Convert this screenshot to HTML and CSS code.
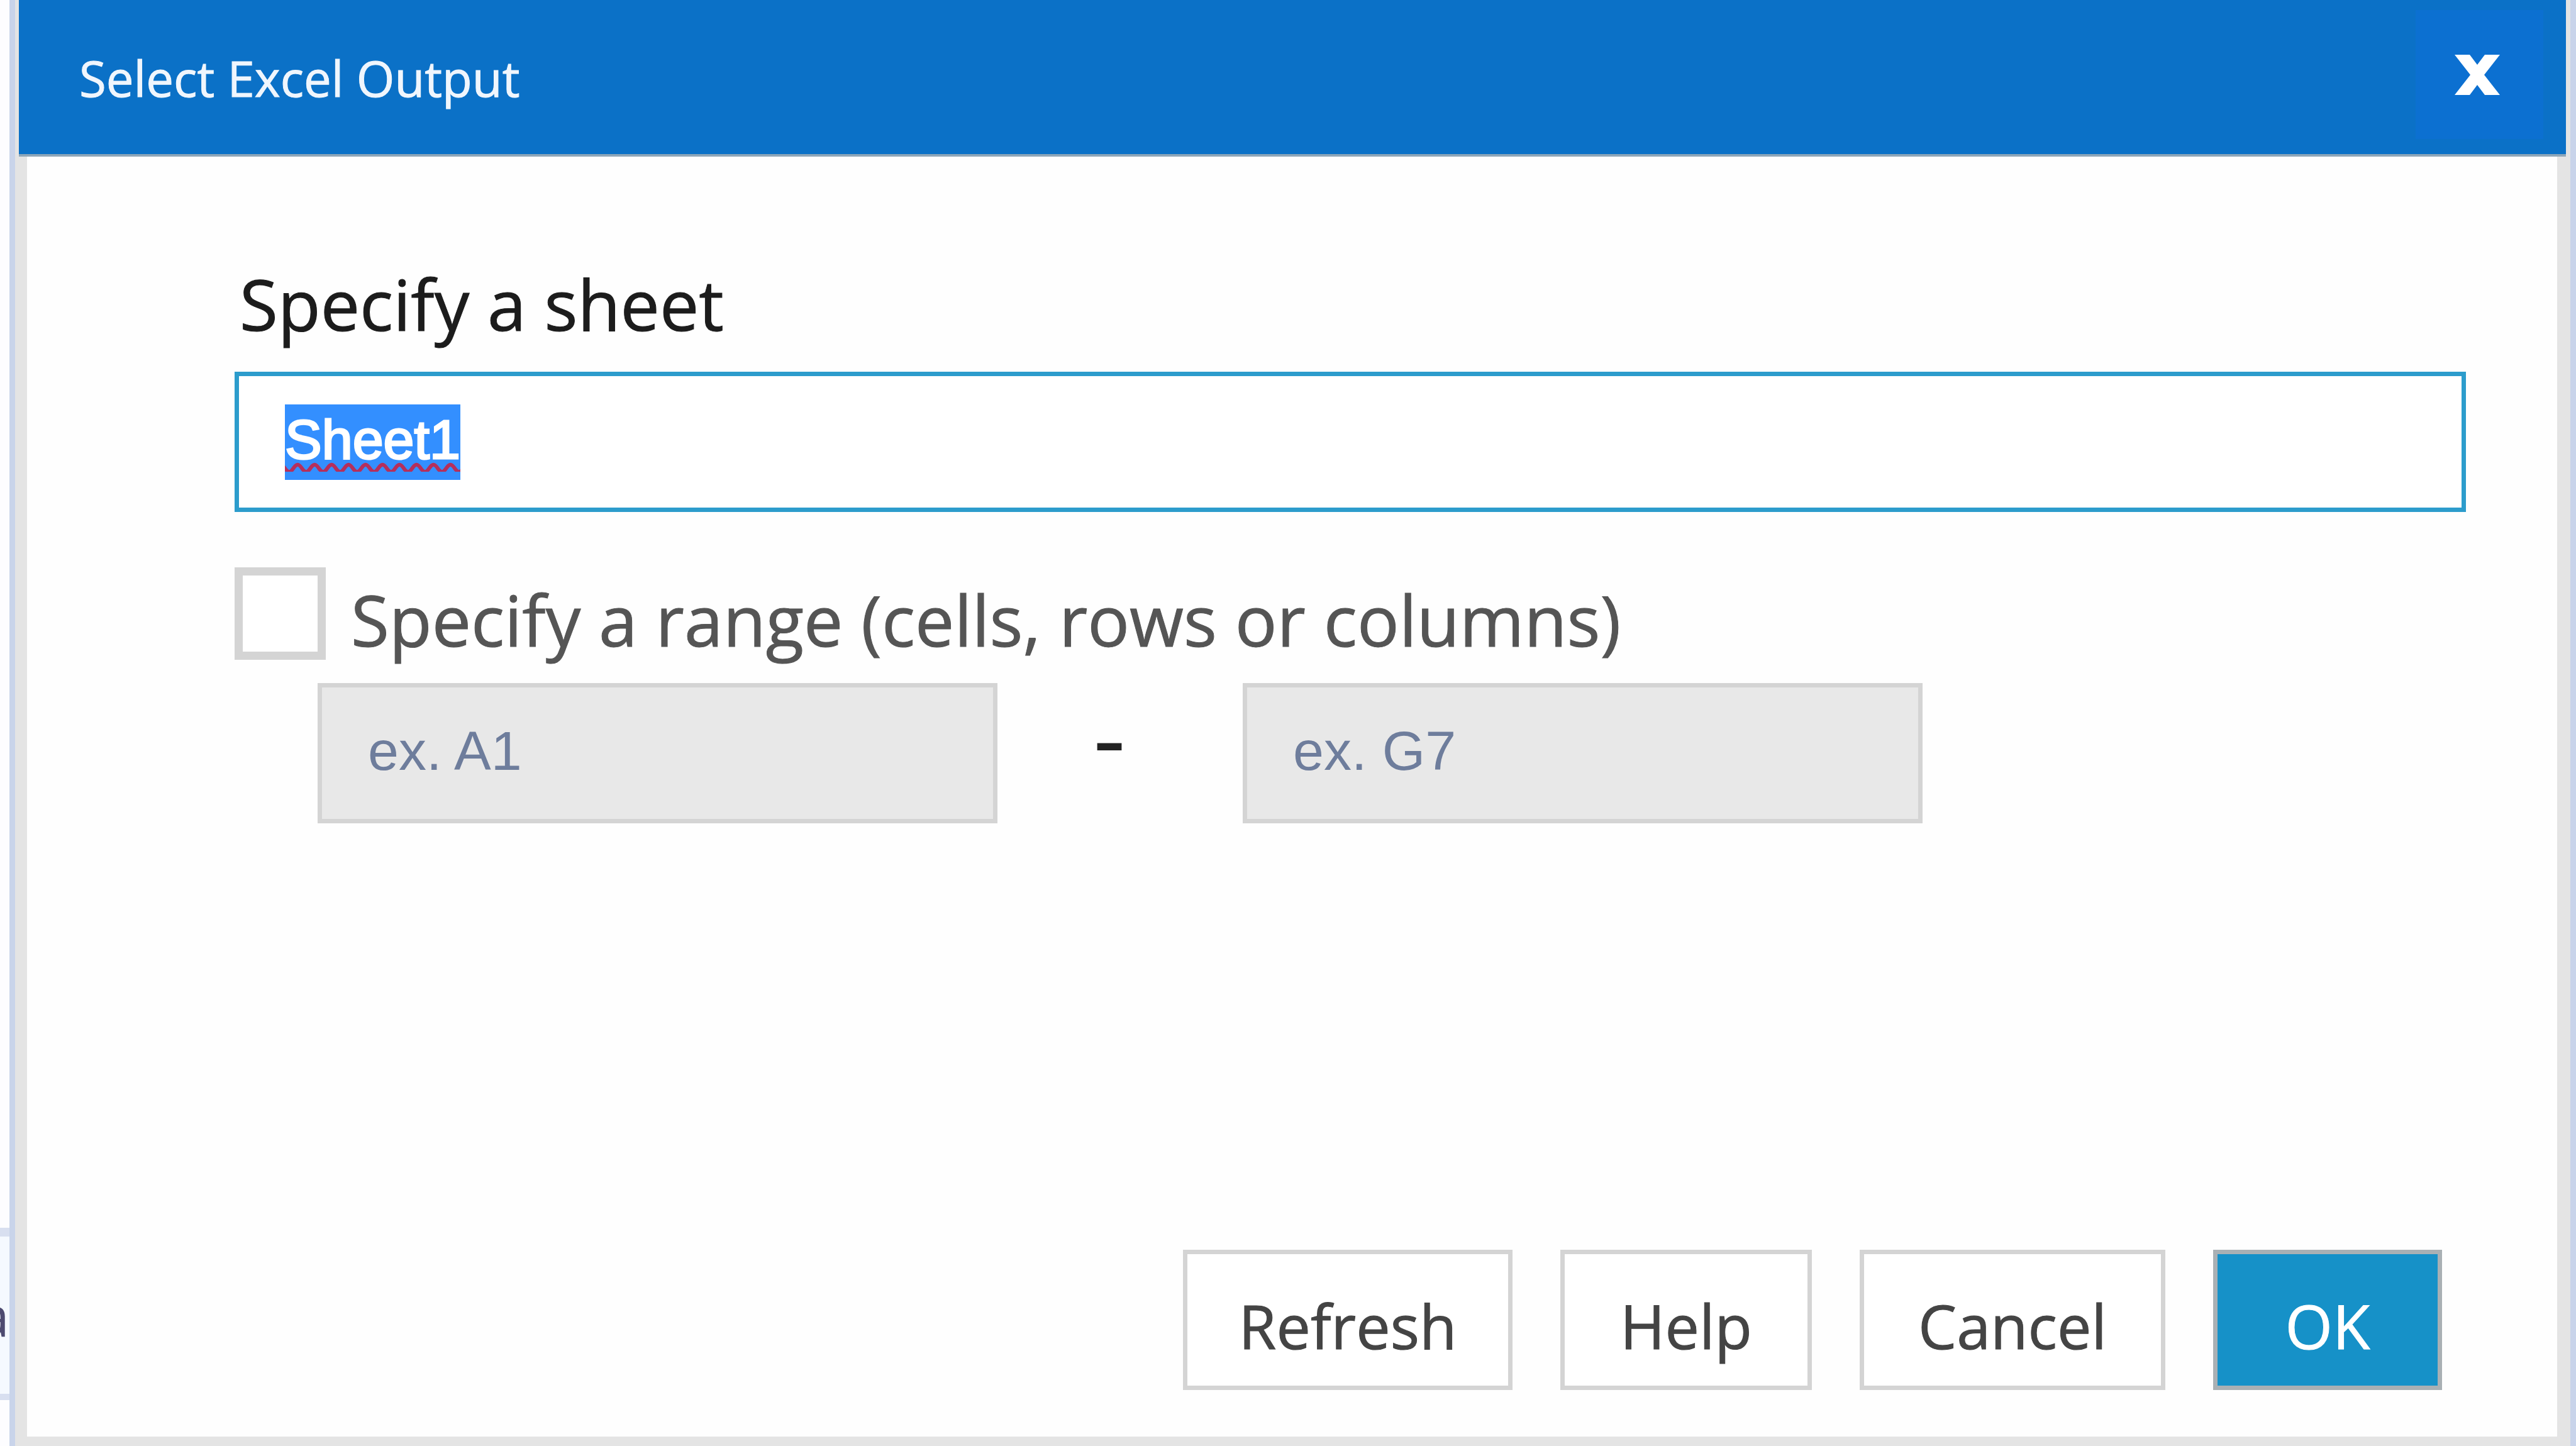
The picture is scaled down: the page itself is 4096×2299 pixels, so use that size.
FILE: index.html
```html
<!DOCTYPE html>
<html lang="en">
<head>
<meta charset="utf-8">
<title>Select Excel Output</title>
<link rel="stylesheet" href="styles.css">
</head>
<body>
<div class="screen">
  <aside class="behind"><div class="behind-row"><span>a</span></div></aside>
  <main class="dialog" role="dialog" aria-labelledby="dialog-title">
    <header class="titlebar">
      <h1 class="title" id="dialog-title">Select Excel Output</h1>
      <button class="close" type="button" aria-label="Close">
        <svg class="close-icon" viewBox="0 0 72 64" aria-hidden="true"><path d="M0 0H24L36 16L48 0H72L47 32L72 64H48L36 48L24 64H0L25 32Z"/></svg>
      </button>
    </header>
    <form class="content">
      <label class="label" for="sheet">Specify a sheet</label>
      <input class="field sheet" id="sheet" type="text" value="Sheet1" spellcheck="false" autocomplete="off">
      <div class="check-row">
        <input class="check" id="use-range" type="checkbox">
        <label class="label check-label" for="use-range">Specify a range (cells, rows or columns)</label>
      </div>
      <div class="range">
        <input class="field cell" type="text" placeholder="ex. A1" aria-label="First cell" disabled>
        <span class="dash">-</span>
        <input class="field cell" type="text" placeholder="ex. G7" aria-label="Last cell" disabled>
      </div>
      <footer class="actions">
        <button class="button refresh" type="button">Refresh</button>
        <button class="button help" type="button">Help</button>
        <button class="button cancel" type="button">Cancel</button>
        <button class="button ok" type="submit">OK</button>
      </footer>
    </form>
  </main>
</div>
</body>
</html>
```
FILE: styles.css
```css
* {
  box-sizing: border-box;
}

body {
  margin: 0;
  background: #fff;
  font-family: "Open Sans", "Noto Sans", sans-serif;
}

.screen {
  display: flex;
  min-height: 100vh;
}

/* Sliver of the page behind the dialog */
.behind {
  flex: 0 0 15px;
  display: flex;
  flex-direction: column;
  justify-content: flex-end;
  padding-bottom: 73px;
  overflow: hidden;
  background: #fdfdff;
}

.behind-row {
  display: flex;
  justify-content: flex-end;
  height: 274px;
  border-top: 14px solid #d8dff0;
  border-bottom: 10px solid #d8dff0;
  background: #f5f9ff;
  color: #4d4a70;
  font-size: 88px;
  line-height: 250px;
}

.dialog {
  flex: 1;
  display: flex;
  flex-direction: column;
  border: solid #c9d4ea;
  border-width: 0 9px;
  background: #e4e4e4;
}

.titlebar {
  display: flex;
  justify-content: space-between;
  margin: 0 7px 0 6px;
  padding: 16px 36px 18px 96px;
  border-bottom: 4px solid #8ea6b8;
  background: #0b71c7;
}

.title {
  margin: 0;
  padding-top: 6px;
  color: #f0f6fd;
  font-size: 78px;
  font-weight: 400;
  line-height: 205px;
  -webkit-text-stroke: 1px currentColor;
}

.close {
  display: flex;
  align-items: center;
  justify-content: center;
  width: 203px;
  height: 205px;
  padding: 0 8px 0 0;
  border: 0;
  background: #0c70d1;
}

.close-icon {
  width: 72px;
  height: 64px;
  fill: #fff;
}

.content {
  flex: 1;
  display: flex;
  flex-direction: column;
  margin: 0 21px 15px 19px;
  padding: 158px 145px 74px 330px;
  background: #fefefe;
}

.label {
  padding-left: 8px;
  color: #1c1c1c;
  font-size: 111px;
  line-height: 152px;
  -webkit-text-stroke: 1px currentColor;
}

.field {
  height: 223px;
  padding: 0 73px 8px;
  border: 7px solid #d4d4d4;
  border-radius: 0;
  outline: 0;
  font-family: "Liberation Sans", Arial, sans-serif;
  font-size: 88px;
  line-height: 120px;
}

.sheet {
  width: 100%;
  margin-top: 32px;
  border-color: #2c9ccc;
  background: linear-gradient(#338fff, #338fff) 73px center / 279px 120px no-repeat #fff;
  color: #fff;
  text-decoration: underline wavy 6px #b52f5c;
  text-decoration-skip-ink: none;
  text-underline-offset: 8px;
  -webkit-text-stroke: 3px currentColor;
}

.check-row {
  display: flex;
  align-items: flex-start;
  margin-top: 88px;
}

.check {
  appearance: none;
  width: 145px;
  height: 147px;
  margin: 0;
  border: 13px solid #d4d4d4;
  background: #fff;
}

.check-label {
  padding: 7px 0 0 40px;
  color: #555;
}

.range {
  display: flex;
  align-items: center;
  margin: 25px 0 0 132px;
}

.cell {
  width: 1081px;
  background: #e8e8e8;
}

.cell::placeholder {
  color: #6e7d9c;
  opacity: 1;
}

.dash {
  width: 390px;
  padding: 0 34px 60px 0;
  color: #222;
  font-size: 160px;
  line-height: 120px;
  text-align: center;
}

.actions {
  display: flex;
  justify-content: flex-end;
  gap: 76px;
  margin-top: auto;
  padding-right: 38px;
}

.button {
  height: 223px;
  padding: 16px 0 0;
  border: 7px solid #d4d4d4;
  background: #fff;
  color: #444;
  font-family: inherit;
  font-size: 97px;
  line-height: 120px;
  -webkit-text-stroke: 1px currentColor;
}

.refresh {
  width: 524px;
}

.help {
  width: 400px;
}

.cancel {
  width: 486px;
}

.ok {
  width: 364px;
  border-color: #a9b0b4;
  background: #1691c8;
  color: #fff;
}
```
